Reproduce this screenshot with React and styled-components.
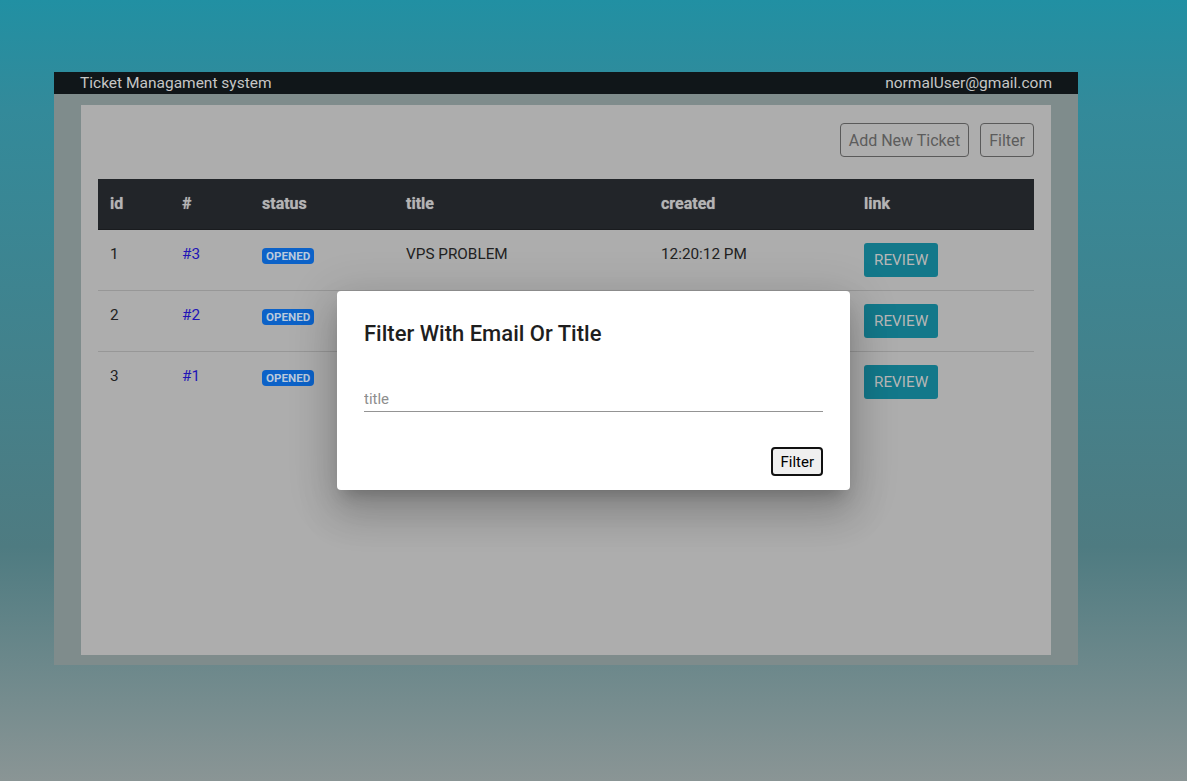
import React from 'react';
import styled, { createGlobalStyle } from 'styled-components';

const GlobalStyle = createGlobalStyle`
  html, body {
    margin: 0;
    height: 100%;
  }
  body {
    font-family: Roboto, "Liberation Sans", sans-serif;
    background: linear-gradient(180deg, #2190a3 0%, #338a9a 14%, #4e7b81 70%, #8a9595 100%);
    background-attachment: fixed;
  }
`;

const Page = styled.div`
  padding: 72px 0 0 54px;
`;

const Shell = styled.div`
  position: relative;
  width: 1024px;
  height: 593px;
  background: #7f8c8c;
  display: flex;
  flex-direction: column;
`;

const Navbar = styled.nav`
  height: 22px;
  background: #101619;
  color: #c6c6c6;
  font-size: 15.5px;
  display: flex;
  align-items: center;
  justify-content: space-between;
  padding: 0 26px;
`;

const Body = styled.div`
  flex: 1;
  padding: 11px 27px 10px;
  display: flex;
`;

const Card = styled.div`
  flex: 1;
  min-width: 0;
  background: #adadad;
  padding: 18px 17px;
`;

const Toolbar = styled.div`
  display: flex;
  justify-content: flex-end;
  gap: 11px;
  margin-bottom: 22px;
`;

const OutlineButton = styled.button`
  height: 34px;
  padding: 0 8px;
  border: 1px solid #5a5a5a;
  border-radius: 4px;
  background: transparent;
  color: #5c5c5c;
  font-family: inherit;
  font-size: 16px;
`;

const Table = styled.table`
  width: 100%;
  border-collapse: collapse;
  table-layout: fixed;
`;

const Th = styled.th`
  box-sizing: border-box;
  width: ${(p) => p.w}px;
  height: 50px;
  padding: 0 12px;
  text-align: left;
  background: #222529;
  color: #b4b4b4;
  font-size: 16px;
  font-weight: 700;
  text-shadow: 0 0 1px rgba(200, 200, 200, 0.6);
  border-bottom: 1px solid #1a1c1f;
`;

const Tr = styled.tr`
  border-bottom: ${(p) => (p.last ? 'none' : '1px solid #979797')};
`;

const Td = styled.td`
  height: 61px;
  padding: 12px 12px 0;
  vertical-align: top;
  color: #222;
  font-size: 15.3px;
  line-height: 24px;
  box-sizing: border-box;
`;

const TicketLink = styled.a`
  color: #2114b6;
  text-decoration: none;
`;

const Badge = styled.span`
  display: inline-block;
  margin-top: 6px;
  height: 16px;
  line-height: 16px;
  padding: 0 4px;
  border-radius: 4px;
  background: #0c62c8;
  color: #b9c9dc;
  font-size: 11.6px;
  font-weight: 700;
  vertical-align: top;
`;

const ReviewButton = styled.button`
  margin-top: 1px;
  height: 34px;
  padding: 0 10px;
  border: none;
  border-radius: 3px;
  background: #13788a;
  color: #b7b7b7;
  font-family: inherit;
  font-size: 15.3px;
  text-transform: uppercase;
`;

const Dialog = styled.div`
  position: absolute;
  left: 283px;
  top: 219px;
  width: 513px;
  box-sizing: border-box;
  padding: 29px 27px 14px;
  background: #fff;
  border-radius: 4px;
  box-shadow: 0 11px 15px -7px rgba(0, 0, 0, 0.2), 0 24px 38px 3px rgba(0, 0, 0, 0.14),
    0 9px 46px 8px rgba(0, 0, 0, 0.12);
`;

const DialogTitle = styled.h2`
  margin: 0;
  font-size: 22px;
  line-height: 28px;
  font-weight: 500;
  color: #1e1e1e;
`;

const Field = styled.input`
  display: block;
  width: 100%;
  box-sizing: border-box;
  margin-top: 40px;
  height: 24px;
  padding: 0 0 1px;
  border: none;
  border-bottom: 1px solid #949494;
  outline: none;
  font-family: inherit;
  font-size: 15px;
  color: #222;
  &::placeholder {
    color: #8e8e8e;
  }
`;

const Actions = styled.div`
  display: flex;
  justify-content: flex-end;
  margin-top: 35px;
`;

const DialogButton = styled.button`
  height: 29px;
  padding: 0 7px;
  border: 2px solid #111;
  border-radius: 4px;
  background: #efefef;
  color: #000;
  font-family: inherit;
  font-size: 15px;
`;

const columns = [
  ['id', 72],
  ['#', 80],
  ['status', 144],
  ['title', 255],
  ['created', 203],
  ['link', 182],
];

const tickets = [
  { id: 1, num: 3, title: 'VPS PROBLEM', created: '12:20:12 PM' },
  { id: 2, num: 2, title: '', created: '' },
  { id: 3, num: 1, title: '', created: '' },
];

export default function App() {
  return (
    <>
      <GlobalStyle />
      <Page>
        <Shell>
          <Navbar>
            <span>Ticket Managament system</span>
            <span>normalUser@gmail.com</span>
          </Navbar>
          <Body>
            <Card>
              <Toolbar>
                <OutlineButton>Add New Ticket</OutlineButton>
                <OutlineButton>Filter</OutlineButton>
              </Toolbar>
              <Table>
                <thead>
                  <tr>
                    {columns.map(([name, w]) => (
                      <Th key={name} w={w}>{name}</Th>
                    ))}
                  </tr>
                </thead>
                <tbody>
                  {tickets.map((t, i) => (
                    <Tr key={t.id} last={i === tickets.length - 1}>
                      <Td>{t.id}</Td>
                      <Td><TicketLink href="#">#{t.num}</TicketLink></Td>
                      <Td><Badge>OPENED</Badge></Td>
                      <Td>{t.title}</Td>
                      <Td>{t.created}</Td>
                      <Td><ReviewButton>Review</ReviewButton></Td>
                    </Tr>
                  ))}
                </tbody>
              </Table>
            </Card>
          </Body>
          <Dialog>
            <DialogTitle>Filter With Email Or Title</DialogTitle>
            <Field placeholder="title" />
            <Actions>
              <DialogButton>Filter</DialogButton>
            </Actions>
          </Dialog>
        </Shell>
      </Page>
    </>
  );
}
